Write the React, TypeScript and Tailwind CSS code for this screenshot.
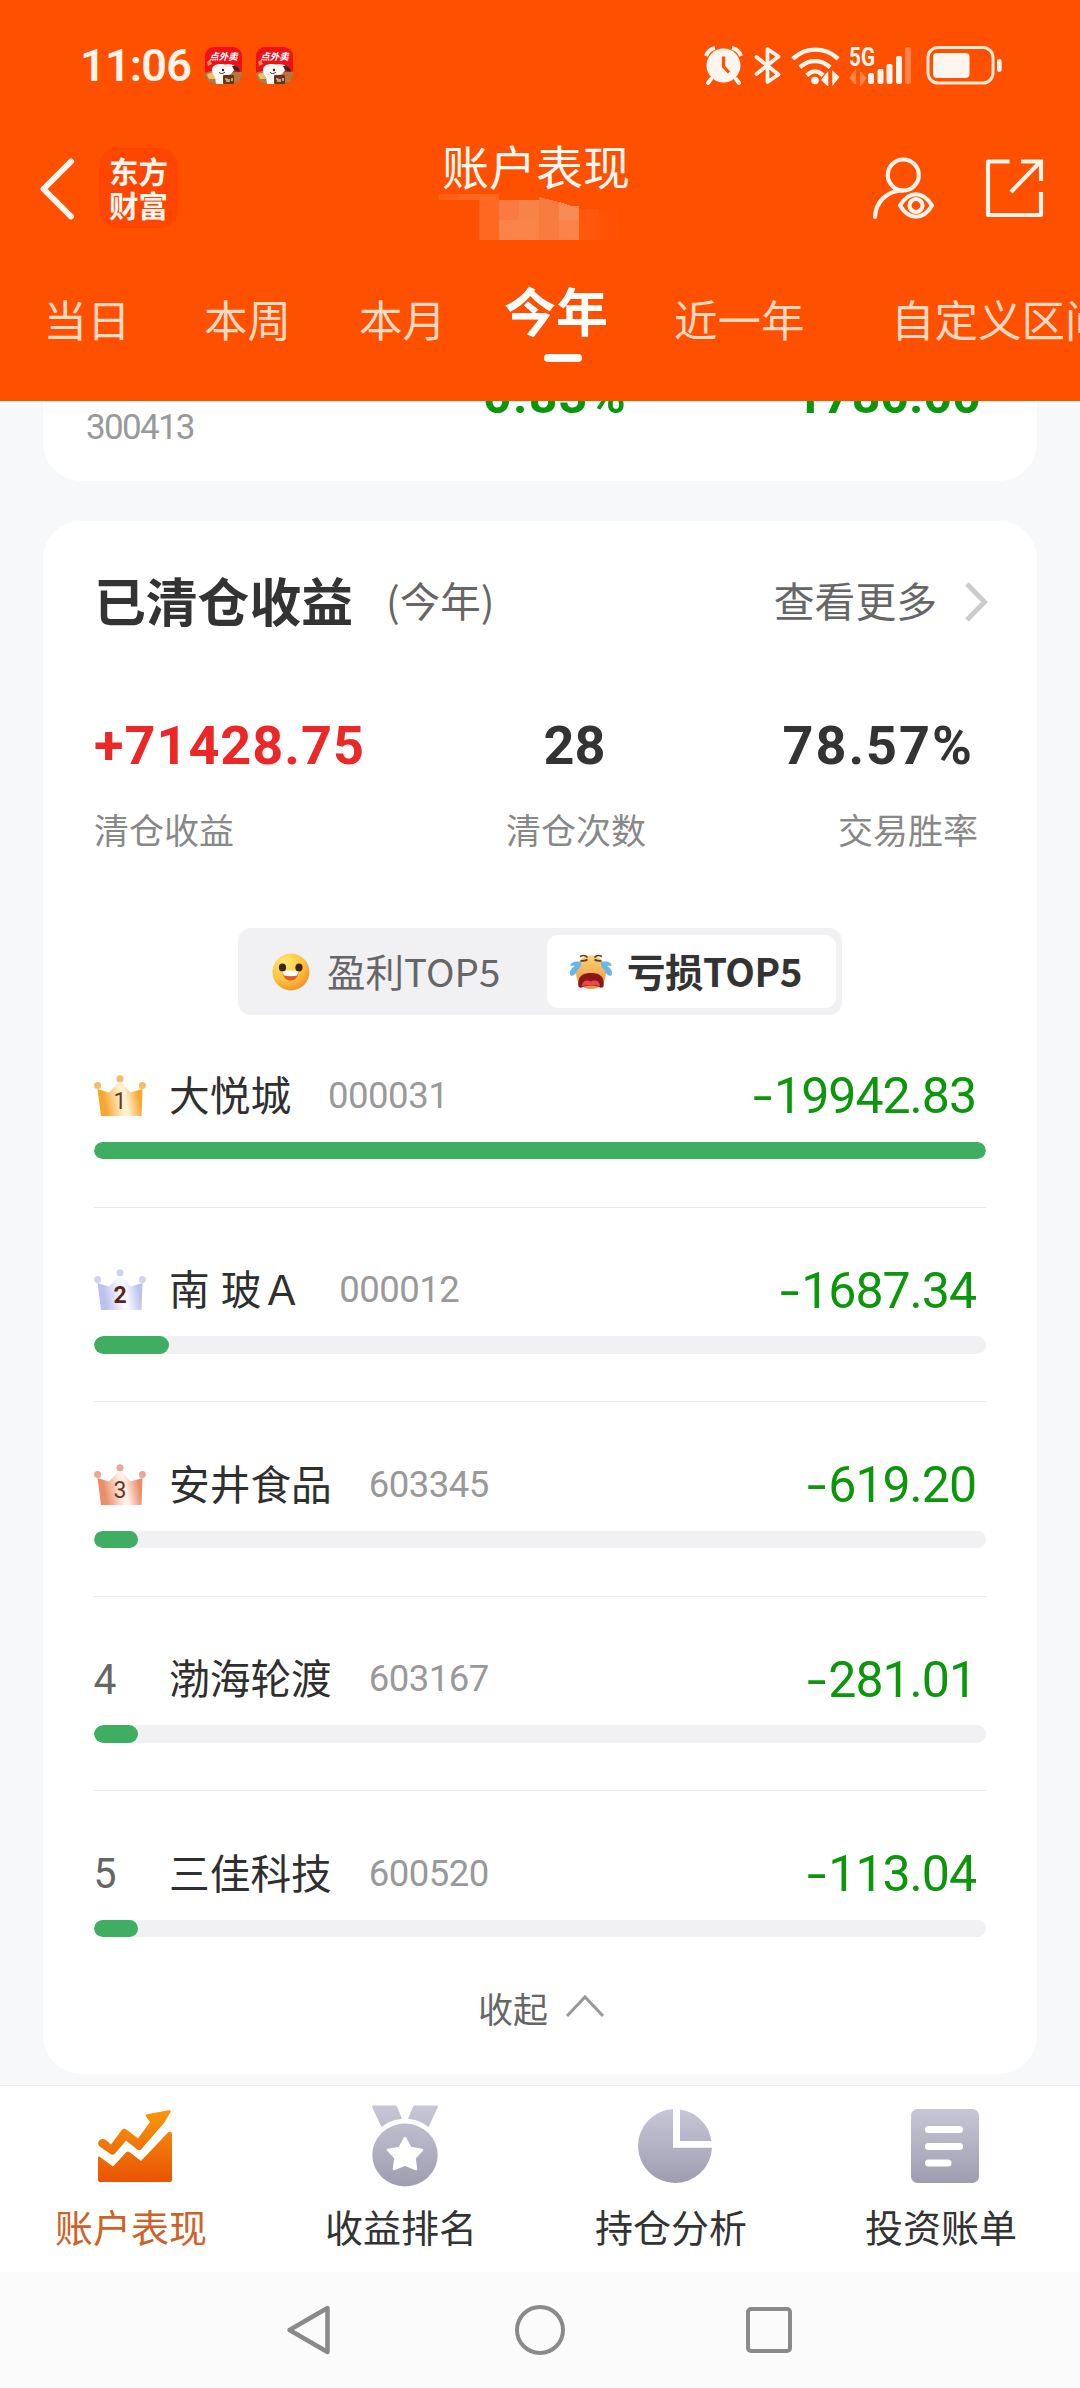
import React from 'react';

interface Stock {
  rank: number;
  name: string;
  code: string;
  amount: string;
  percent: number;
}

const stocks: Stock[] = [
  { rank: 1, name: '大悦城', code: '000031', amount: '19942.83', percent: 100 },
  { rank: 2, name: '南 玻Ａ', code: '000012', amount: '1687.34', percent: 8.4 },
  { rank: 3, name: '安井食品', code: '603345', amount: '619.20', percent: 4.93 },
  { rank: 4, name: '渤海轮渡', code: '603167', amount: '281.01', percent: 4.93 },
  { rank: 5, name: '三佳科技', code: '600520', amount: '113.04', percent: 4.93 },
];

const crownColors = [
  { edge: '#f7a62e', mid: '#fff0d2', ball: '#f7bd63', text: '#6b3a24' },
  { edge: '#bcc2ec', mid: '#f8f9ff', ball: '#cfd3ef', text: '#5a2418' },
  { edge: '#ea8d6b', mid: '#ffeee6', ball: '#e6a995', text: '#6b3226' },
];

const TakeoutAppIcon = () => (
  <svg width="37" height="37" viewBox="0 0 37 37" className="shrink-0">
    <defs>
      <clipPath id="takeout-clip"><rect width="37" height="37" rx="9" /></clipPath>
    </defs>
    <g clipPath="url(#takeout-clip)">
      <rect width="37" height="37" fill="#ee1118" />
      <path d="M0 26c6-3 12-2 16 0s14-2 21-1v12H0z" fill="#b8763c" />
      <path d="M2 15l3-2 2 4-4 2z" fill="#f08a4a" />
      <path d="M2 28c2-3 7-3 9 0l-1 4H4z" fill="#e9bd72" />
      <path d="M7 23c0-5 6-7 13-5.500 6-1 10 0 11 3.500l-5 6-7 3v7h-8l-1-7c-2-2-3-4-3-7z" fill="#fffaf5" />
      <path d="M27 19c5-.5 8 2 7.500 6L29 23z" fill="#3a2a26" />
      <circle cx="18" cy="23" r="1.200" fill="#2b2020" />
      <path d="M14 25c1 2 4 2 6 0" stroke="#2b2020" strokeWidth="1" fill="none" />
      <rect x="18" y="28" width="11" height="9" rx="1" fill="#6a3518" />
      <path d="M20 32h2v3M24 32v3M27 31v3" stroke="#f5e6c8" strokeWidth="1.200" fill="none" />
    </g>
    <text x="18.500" y="13" textAnchor="middle" fontSize="9.500" fontWeight="bold" fontStyle="italic" fill="#fff">点外卖</text>
  </svg>
);

const StatusIcons = () => (
  <svg width="300" height="42" viewBox="704 43 300 42" fill="none" className="shrink-0">
    {/* alarm */}
    <circle cx="724.500" cy="64.500" r="17" fill="#fff5ef" />
    <path d="M707 55a12 12 0 0 1 9-8M742 55a12 12 0 0 0-9-8" stroke="#fff5ef" strokeWidth="4" />
    <path d="M712 78l-3 4M737 78l3 4" stroke="#fff5ef" strokeWidth="4" strokeLinecap="round" />
    <path d="M724.500 55.500v10l5.500 6" stroke="#ff5000" strokeWidth="3.200" strokeLinejoin="round" />
    {/* bluetooth */}
    <path d="M757.500 56l22 17.500-11 7.500V48l11 7.500-22 17.500" stroke="#fff5ef" strokeWidth="3.800" strokeLinejoin="round" strokeLinecap="round" />
    {/* wifi */}
    <path d="M795.500 56.500c12-10.500 30-10.500 42 0M802.500 65c8-6.500 19-6.500 27 0M809.500 73c4-3.500 9-3.500 13 0" stroke="#fff5ef" strokeWidth="4.400" strokeLinecap="square" />
    <circle cx="816" cy="79.500" r="3.800" fill="#fff5ef" />
    <path d="M823 79l5.500-7v12zM828 72v12" stroke="#fff5ef" strokeWidth="1.500" fill="#fff5ef" />
    <path d="M834 71v12l5.500-7z" stroke="#fff5ef" strokeWidth="1.500" fill="#fff5ef" />
    {/* mobile signal */}
    <text x="850" y="65" fontFamily="Roboto, sans-serif" fontSize="25" fontWeight="700" fill="#fff5ef" textLength="26" lengthAdjust="spacingAndGlyphs">5G</text>
    <path d="M851 78l5-7v12M862 71v12l5-7" stroke="#ff8348" strokeWidth="2.200" fill="#ff8348" />
    <g fill="#fff5ef">
      <rect x="869" y="72" width="6" height="11" rx="2" />
      <rect x="878.500" y="68" width="6" height="15" rx="2" />
      <rect x="887.500" y="63" width="6" height="20" rx="2" />
      <rect x="897" y="55" width="6" height="28" rx="2" />
    </g>
    <rect x="906" y="46" width="6" height="37" rx="2" fill="#ff8348" />
    {/* battery */}
    <rect x="929" y="46.500" width="65" height="35.500" rx="10" stroke="#ffe9d8" strokeWidth="3" />
    <rect x="934" y="52" width="36.500" height="25" rx="4" fill="#fff5ef" />
    <rect x="998" y="58" width="4.600" height="13" rx="2.300" fill="#fff5ef" />
  </svg>
);

const HappyFace = () => (
  <svg width="38" height="38" viewBox="0 0 38 38" className="shrink-0">
    <defs>
      <radialGradient id="happy" cx="0.35" cy="0.25" r="0.8">
        <stop offset="0" stopColor="#ffe86e" />
        <stop offset="0.6" stopColor="#fcc33c" />
        <stop offset="1" stopColor="#ef8f2c" />
      </radialGradient>
    </defs>
    <circle cx="19" cy="19" r="18.500" fill="url(#happy)" />
    <ellipse cx="10.500" cy="14.500" rx="3.600" ry="4" fill="#3c2412" />
    <ellipse cx="27" cy="14.500" rx="3.600" ry="4" fill="#3c2412" />
    <path d="M10.500 19c5-1.500 11-1.500 16 0-.5 5-3.500 8.500-8 8.500s-7.500-3.500-8-8.500z" fill="#e2572c" />
    <path d="M10.500 18.500c5-1.500 11-1.500 16 0l-1.500 4c-4 1-9 1-13 0z" fill="#fff" />
  </svg>
);

const CryingFace = () => (
  <svg width="44" height="36" viewBox="0 0 44 36" className="shrink-0">
    <defs>
      <linearGradient id="crying" x1="0" y1="0" x2="0" y2="1">
        <stop offset="0" stopColor="#f9d375" />
        <stop offset="1" stopColor="#f0913c" />
      </linearGradient>
    </defs>
    <path d="M22 1.500c9 0 15 7 15 17 0 9-5 16.500-15 16.500S7 27.500 7 18.500c0-10 6-17 15-17z" fill="url(#crying)" />
    <path d="M11 2.500c3-1.500 6-1 7.500 1M11.500 7c3 0 5 0 7-1.500M33 2.500c-3-1.500-6-1-7.500 1M32.500 7c-3 0-5 0-7-1.500" stroke="#5a3c22" strokeWidth="1.600" fill="none" />
    <path d="M12 8C7 6.500 1 8 1.500 12 3 12 5 11.500 6 12c-4 2-6 6-4.500 9.500C5 22.500 8 19 8 16c3-1 4.500-5 4-8zM32 8c5-1.500 11 0 10.500 4-1.500 0-3.500-.5-4.500 0 4 2 6 6 4.500 9.500C39 22.500 36 19 36 16c-3-1-4.500-5-4-8z" fill="#66b6ea" />
    <path d="M14 20.500c4-2 12-2 16 0 4 2 5.500 7 4.500 12-2 2-4 1-5 0-4-1.500-11-1.500-15 0-1 1-3 2-5 0-1-5 .5-10 4.500-12z" fill="#8c1616" />
    <path d="M13 32c0-5 5-7 9-4.500 4-2.500 9-.5 9 4.500-5-1.500-13-1.500-18 0z" fill="#e8474c" />
  </svg>
);

const Crown = ({ rank }: { rank: number }) => {
  const c = crownColors[rank - 1];
  return (
    <svg width="52" height="42" viewBox="0 0 52 42" className="shrink-0">
      <defs>
        <linearGradient id={`crown-${rank}`} x1="0" y1="0.15" x2="1" y2="0">
          <stop offset="0.08" stopColor={c.edge} />
          <stop offset="0.46" stopColor={c.mid} />
          <stop offset="0.56" stopColor={c.mid} />
          <stop offset="0.86" stopColor={c.edge} />
        </linearGradient>
      </defs>
      <path d="M3.500 14L15 17.500 26 6l10.500 11.500L48.500 14 47.500 41H7z" fill={`url(#crown-${rank})`} />
      <circle cx="3.600" cy="10.500" r="3.500" fill={c.ball} />
      <circle cx="26" cy="3.800" r="3.500" fill={c.ball} />
      <circle cx="48.400" cy="10.500" r="3.500" fill={c.ball} />
      <text x="26" y="34" textAnchor="middle" fontFamily="Roboto, sans-serif" fontSize="23" fontWeight={rank === 2 ? 700 : 400} fill={c.text}>{rank}</text>
    </svg>
  );
};

const ChartIcon = () => (
  <svg width="74" height="72" viewBox="0 0 74 72">
    <defs>
      <linearGradient id="chart" gradientUnits="userSpaceOnUse" x1="0" y1="0" x2="0" y2="72">
        <stop offset="0" stopColor="#f7980c" />
        <stop offset="1" stopColor="#ea5304" />
      </linearGradient>
    </defs>
    <g fill="url(#chart)">
      <path d="M1 36c-3-5 3-9 7-6l5 4.500L23 21c2-3 4-2.500 6-1l11 8.500L52 12l-4-5.500c-.7-1.500 0-2 1-2.300L70.500.2c1.800-.3 2.600.8 1.800 2.300L66 13 43.500 39c-1.500 1.700-3 1.500-4.500.3L28 30.500 17 43.500c-2 2-3.500 1.500-5 .3z" />
      <path d="M0 48c0-1.500 1-1.700 2-1l13 9.500 13-14c1.300-1.300 2.500-1.300 3.500-.5L43 51l26.500-28c2-2 4.500-1.300 4.500 1v46a2 2 0 0 1-2 2H2a2 2 0 0 1-2-2z" />
    </g>
  </svg>
);

const MedalIcon = () => (
  <svg width="66" height="82" viewBox="0 0 66 82">
    <defs>
      <linearGradient id="medal" gradientUnits="userSpaceOnUse" x1="0" y1="0" x2="0" y2="82">
        <stop offset="0" stopColor="#c8c7d8" />
        <stop offset="1" stopColor="#9e9db0" />
      </linearGradient>
    </defs>
    <g fill="url(#medal)">
      <path d="M1.500.5H23c1.200 0 1.800.5 2.200 1.500L30 14c-8 .5-15 3.500-20.500 8L.3 2.500C-.2 1.300.4.500 1.500.500zM64.500.5H43c-1.200 0-1.800.5-2.200 1.500L36 14c8 .5 15 3.500 20.500 8l9.200-19.500c.5-1.200-.1-2-1.200-2z" />
      <ellipse cx="33" cy="50" rx="32.700" ry="31.500" />
    </g>
    <path d="M33 33l5.500 10L50 45l-7.500 8L44 64l-11-4.500L22 64l1.500-11L16 45l11.500-2z" fill="#fff" stroke="#fff" strokeWidth="2.500" strokeLinejoin="round" />
  </svg>
);

const PieIcon = () => (
  <svg width="74" height="74" viewBox="0 0 74 74">
    <defs>
      <linearGradient id="pie" gradientUnits="userSpaceOnUse" x1="0" y1="0" x2="0" y2="74">
        <stop offset="0" stopColor="#c8c7d8" />
        <stop offset="1" stopColor="#9e9db0" />
      </linearGradient>
    </defs>
    <path d="M35 0v38.700h39A37 37 0 1 1 35 0zM42 .5A37 37 0 0 1 73.500 32H42z" fill="url(#pie)" />
  </svg>
);

const BillIcon = () => (
  <svg width="68" height="74" viewBox="0 0 68 74">
    <defs>
      <linearGradient id="bill" x1="0" y1="0" x2="0" y2="1">
        <stop offset="0" stopColor="#c8c7d8" />
        <stop offset="1" stopColor="#9e9db0" />
      </linearGradient>
    </defs>
    <rect width="68" height="74" rx="6.500" fill="url(#bill)" />
    <path d="M17.500 20.500h31M17.500 37.500h31M17.500 54h19.500" stroke="#fff" strokeWidth="7" strokeLinecap="round" />
  </svg>
);

const Header = () => (
  <header className="h-[401px] bg-[#ff5000] overflow-hidden">
    <div className="flex h-[130px] items-center justify-between pl-[80px] pr-[77px]">
      <div className="flex items-center">
        <span className="w-[125px] font-['Roboto',sans-serif] text-[45px] leading-none font-semibold tracking-[-0.8px] text-[#fff3ea]">11:06</span>
        <div className="flex gap-[14px]">
          <TakeoutAppIcon />
          <TakeoutAppIcon />
        </div>
      </div>
      <StatusIcons />
    </div>

    <div className="flex h-[120px] items-start pl-[38px]">
      <svg width="38" height="62" viewBox="0 0 38 62" className="mt-[28px]" fill="none">
        <path d="M33 3.500L5.500 31 33 58.500" stroke="#fff6ef" strokeWidth="6" strokeLinecap="round" strokeLinejoin="round" />
      </svg>
      <div className="ml-[23px] mt-[18px] flex h-[80px] w-[79px] flex-col items-center rounded-[18px] bg-[#ff4600] pt-[5px] text-[29.500px] leading-[34px] font-bold text-[#fff6ef]">
        <span>东方</span>
        <span>财富</span>
      </div>
      <div className="ml-[260px] w-[200px]">
        <h1 className="ml-[4px] mt-[5px] h-[60px] text-[47px] leading-[60px] whitespace-nowrap text-[#fff8f2]">账户表现</h1>
        <svg width="184" height="46" viewBox="440 194 184 46" className="ml-[1px] -mt-px" shapeRendering="crispEdges">
          <rect x="440" y="194" width="20" height="6" fill="#ff6016" />
          <rect x="460" y="194" width="20" height="6" fill="#ff6620" />
          <rect x="480" y="194" width="20" height="46" fill="#ff6820" />
          <rect x="500" y="200" width="20" height="20" fill="#f97b42" />
          <rect x="520" y="200" width="20" height="20" fill="#f88247" />
          <rect x="500" y="220" width="40" height="20" fill="#f98348" />
          <path d="M540 197l20 5v38h-20z" fill="#f87c40" />
          <path d="M560 202l12 4h8v14h-20z" fill="#f88a56" />
          <rect x="560" y="220" width="20" height="20" fill="#f98349" />
          <rect x="580" y="209" width="20" height="31" fill="#ff580c" />
          <rect x="600" y="209" width="20" height="31" fill="#ff5204" />
        </svg>
      </div>
      <svg width="64" height="64" viewBox="872 156 64 64" className="ml-[233px] mt-[26px]" fill="none" stroke="#fff3ea" strokeWidth="4.200">
        <circle cx="904.300" cy="175" r="15.500" />
        <path d="M876 217c.5-15 12-26.500 28-26.500" strokeLinecap="round" />
        <path d="M901 205.500c9-15 23-15 32 0-9 15-23 15-32 0z" strokeLinejoin="round" />
        <circle cx="917" cy="205.500" r="6.500" />
      </svg>
      <svg width="60" height="62" viewBox="986 157 60 62" className="ml-[50px] mt-[27px]" fill="none" stroke="#fff3ea" strokeWidth="4.200">
        <path d="M1010.500 161.500H989V215h53v-23" strokeLinejoin="round" />
        <path d="M1022 161.500h20V181M1012 192l29-30" />
      </svg>
    </div>

    <nav className="flex h-[151px] items-start pl-[43.500px] pt-[39px] text-[43.500px] leading-[60px] whitespace-nowrap text-[#ffd9c2]">
      <a className="w-[160.500px] shrink-0">当日</a>
      <a className="w-[155px] shrink-0">本周</a>
      <a className="w-[145px] shrink-0">本月</a>
      <a className="-mt-[9px] flex w-[170px] shrink-0 flex-col text-[52px] font-bold text-white">
        今年
        <span className="ml-[40px] mt-[14px] h-[8px] w-[38px] rounded-full bg-[#fffaf5]"></span>
      </a>
      <a className="w-[217px] shrink-0">近一年</a>
      <a className="shrink-0">自定义区间</a>
    </nav>
  </header>
);

const StockRow: React.FC<{ stock: Stock }> = ({ stock }) => (
  <li className="border-b border-[#ebebed] pt-[52.500px] pb-[47.500px] first:pt-[50.500px] last:border-0 last:pb-0">
    <div className="flex h-[60px] items-center">
      <div className="flex w-[75px] items-center font-['Roboto',sans-serif] text-[43px] leading-none text-[#666]">
        {stock.rank <= 3 ? <Crown rank={stock.rank} /> : <span className="-ml-px scale-x-95">{stock.rank}</span>}
      </div>
      <span className="-mt-[4px] text-[40.700px] leading-[56px] whitespace-pre text-[#2f2f2f] [word-spacing:2px]">{stock.name}</span>
      <span className="mt-[1px] ml-[37px] font-['Roboto',sans-serif] text-[36.500px] leading-none tracking-[-0.5px] text-[#999]">{stock.code}</span>
      <span className="mt-[1px] ml-auto flex items-center pr-[10px] font-['Roboto',sans-serif] text-[50px] leading-none tracking-[-1px] text-[#0c960c]">
        <span className="w-[21px] origin-left scale-x-140">-</span>
        {stock.amount}
      </span>
    </div>
    <div className="mt-[16px] h-[17.500px] overflow-hidden rounded-full bg-[#f1f1f3]">
      <div className="h-full rounded-full bg-[#3fae62]" style={{ width: `${stock.percent}%` }}></div>
    </div>
  </li>
);

const ClearedCard = () => (
  <section className="mx-[43px] mt-[40px] h-[1553px] rounded-[38px] bg-white px-[51px] pt-[49px]">
    <div className="flex h-[60px] items-center leading-[60px]">
      <h2 className="text-[51.800px] font-bold text-[#333]">已清仓收益</h2>
      <span className="ml-[33px] text-[40.500px] text-[#666]">(今年)</span>
      <a className="ml-auto text-[40.800px] text-[#666]">查看更多</a>
      <svg width="26" height="42" viewBox="0 0 26 42" className="ml-[27px] mt-[3px] mr-[-4px]" fill="none">
        <path d="M3 3l17.500 18L3 39" stroke="#ccc" strokeWidth="5" />
      </svg>
    </div>

    <div className="mt-[86px] flex pr-[8px] text-[35px] leading-[40px] whitespace-nowrap text-[#888]">
      <div className="w-[412px]">
        <div className="mb-[33px] font-['Roboto',sans-serif] text-[54px] leading-[60px] font-bold tracking-[1px] text-[#ec2727]">+71428.75</div>
        清仓收益
      </div>
      <div className="w-[140px] text-center">
        <div className="mb-[33px] pr-[3px] font-['Roboto',sans-serif] text-[54px] leading-[60px] font-bold text-[#333]">28</div>
        清仓次数
      </div>
      <div className="flex-1 text-right">
        <div className="mb-[33px] pr-[4px] font-['Roboto',sans-serif] text-[54px] leading-[60px] font-bold tracking-[2px] text-[#333]">78.57%</div>
        交易胜率
      </div>
    </div>

    <div className="mt-[79px] ml-[144px] flex h-[87px] w-[604px] items-center rounded-[13px] bg-[#f1f1f4] text-[38.500px] leading-[70px]">
      <button className="flex h-full w-[309px] items-center pl-[34px] text-[#666]">
        <HappyFace />
        <span className="-mt-[4px] ml-[17px]">盈利TOP5</span>
      </button>
      <button className="flex h-[73px] w-[289px] items-center rounded-[11px] bg-white pl-[22px] font-bold text-[#333]">
        <CryingFace />
        <span className="-mt-[4px] ml-[14px] tracking-[-0.5px]">亏损TOP5</span>
      </button>
    </div>

    <ul>
      {stocks.map((stock) => <StockRow key={stock.code} stock={stock} />)}
    </ul>

    <button className="mt-[51px] ml-[384px] flex h-[40px] items-center text-[35px] leading-[40px] text-[#666]">
      收起
      <svg width="40" height="24" viewBox="0 0 40 24" className="ml-[17px] -mt-[5px]" fill="none">
        <path d="M2 22L20 3l18 19" stroke="#999" strokeWidth="3" />
      </svg>
    </button>
  </section>
);

const tabs = [
  { label: '账户表现', icon: <ChartIcon />, active: true },
  { label: '收益排名', icon: <MedalIcon />, active: false },
  { label: '持仓分析', icon: <PieIcon />, active: false },
  { label: '投资账单', icon: <BillIcon />, active: false },
];

const App = () => (
  <div className="flex h-[2388px] w-[1080px] flex-col overflow-hidden bg-[#f6f8fa] font-['Noto_Sans_CJK_SC',sans-serif]">
    <Header />

    {/* tail of the previous card, scrolled under the header */}
    <section className="mx-[43px] flex h-[80px] overflow-hidden rounded-b-[38px] bg-white pl-[43px] font-['Roboto',sans-serif]">
      <span className="mt-[5px] w-[397px] text-[35px] leading-[44px] tracking-[-1.700px] text-[#999]">300413</span>
      <span className="-mt-[35px] text-[50px] leading-[60px] font-bold tracking-[1.300px] text-[#0c960c]">0.83%</span>
      <span className="-mt-[35px] ml-auto pr-[56px] text-[50px] leading-[60px] font-bold text-[#0c960c]">-1780.00</span>
    </section>

    <ClearedCard />

    <nav className="mt-[11px] flex h-[187px] border-t border-[#e8eaee] bg-white">
      {tabs.map((tab) => (
        <a key={tab.label} className="flex flex-1 flex-col items-center">
          <div className="mt-[19px] flex h-[82px] items-center">{tab.icon}</div>
          <span className={`mt-[18.500px] mr-[8px] text-[38px] leading-[40px] ${tab.active ? 'text-[#cf6128]' : 'text-[#333]'}`}>{tab.label}</span>
        </a>
      ))}
    </nav>

    <footer className="flex h-[116px] items-center bg-[#fbfbfb] pl-[285px]">
      <svg width="48" height="54" viewBox="0 0 48 54" fill="none">
        <path d="M42.500 5v44L4.500 27z" stroke="#8a8a8a" strokeWidth="4.500" strokeLinejoin="round" />
      </svg>
      <div className="ml-[182px] h-[50px] w-[50px] rounded-full border-[4.500px] border-[#8a8a8a]"></div>
      <div className="ml-[181px] h-[46px] w-[46px] rounded-[5px] border-[4.500px] border-[#8a8a8a]"></div>
    </footer>
  </div>
);

export default App;
